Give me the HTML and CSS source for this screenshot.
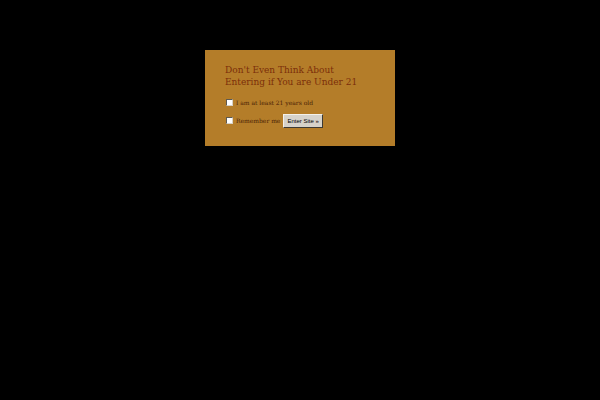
FILE: index.html
```
<!DOCTYPE html>
<html lang="en">
  <head>
    <meta charset="UTF-8" />
    <title>Enter Site</title>
    <link rel="stylesheet" href="styles.css">
  </head>
  <body>
    <main class="gate">
      <h1>Don't Even Think About Entering if You are Under 21</h1>
      <form action="#" method="post">
        <div class="row">
          <input type="checkbox" name="age" id="age" required />
          <label for="age">I am at least 21 years old</label>
        </div>
        <div class="row">
          <input type="checkbox" name="remember" id="remember" />
          <label for="remember">Remember me</label>
          <button type="submit">Enter Site »</button>
        </div>
      </form>
    </main>
  </body>
</html>
```

FILE: styles.css
```
* {
  box-sizing: border-box;
  margin: 0;
  padding: 0;
}

body {
  padding: 50px 8px;
  background-color: #000;
  font-family: "DejaVu Serif", serif;
}

.gate {
  max-width: 190px;
  margin: 0 auto;
  padding: 14px 20px 15px;
  background-color: #b47d29;
  color: #4a1d05;
}

h1 {
  margin-bottom: 7px;
  color: #7b2e0a;
  font-size: 9px;
  font-weight: normal;
  line-height: 12px;
}

.row {
  display: flex;
  align-items: center;
  min-height: 15px;
  margin-bottom: 3px;
  font-size: 6px;
}

input {
  appearance: none;
  width: 7px;
  height: 7px;
  margin: 0 3px 0 1px;
  border: 1px solid;
  border-color: #5e5a50 #d8d2c6 #d8d2c6 #5e5a50;
  background-color: #fff;
}

input:checked {
  background-color: #4a1d05;
}

button {
  margin-left: 3px;
  padding: 3px;
  border: 1px solid;
  border-color: #f4f1ea #3d3a34 #3d3a34 #f4f1ea;
  background-color: #d6d2ca;
  color: #000;
  font-family: "Liberation Sans", sans-serif;
  font-size: 6px;
}
```
